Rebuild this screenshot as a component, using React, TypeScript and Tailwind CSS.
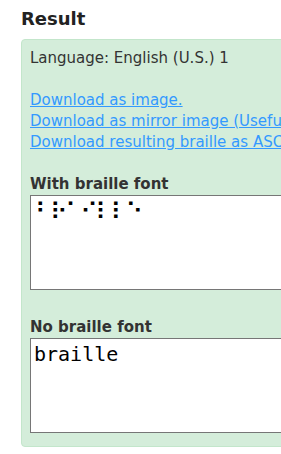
export default function App() {
  return (
    <div className="w-[281px] h-[454px] overflow-hidden bg-white pt-[8px] pl-[21px]" style={{ fontFamily: '"DejaVu Sans", Verdana, sans-serif' }}>
      <h3 className="text-[18px] font-bold leading-[21px] text-[#222] mb-[10px]">Result</h3>
      <div className="w-[500px] rounded-[4px] border border-[#c3e6cb] bg-[#d4edda] pt-[8px] pb-[13px] pl-[8px] text-[15px] leading-[21px] text-[#333]">
        <div>Language: English (U.S.) 1</div>
        <div className="h-[21px]" />
        <div>
          <a href="#" className="text-[#3399ff] underline">Download as image.</a>
        </div>
        <div>
          <a href="#" className="text-[#3399ff] underline">Download as mirror image (Useful for embossing by hand)</a>
        </div>
        <div>
          <a href="#" className="text-[#3399ff] underline">Download resulting braille as ASCII</a>
        </div>
        <div className="h-[21px]" />
        <div className="font-bold">With braille font</div>
        <textarea
          readOnly
          className="block w-[460px] h-[95px] border border-[#767676] bg-white text-black pt-[1px] pl-[4px] text-[24px] tracking-[-2.5px] leading-[30px] resize-none outline-none"
          style={{ fontFamily: '"DejaVu Sans", sans-serif' }}
          value="⠃⠗⠁⠊⠇⠇⠑"
        />
        <div className="font-bold mt-[27px]">No braille font</div>
        <textarea
          readOnly
          className="block w-[460px] h-[95px] border border-[#767676] bg-white text-black pt-[3px] pl-[3px] text-[20px] leading-[24px] resize-none outline-none"
          style={{ fontFamily: '"DejaVu Sans Mono", monospace' }}
          value="braille"
        />
      </div>
    </div>
  );
}
